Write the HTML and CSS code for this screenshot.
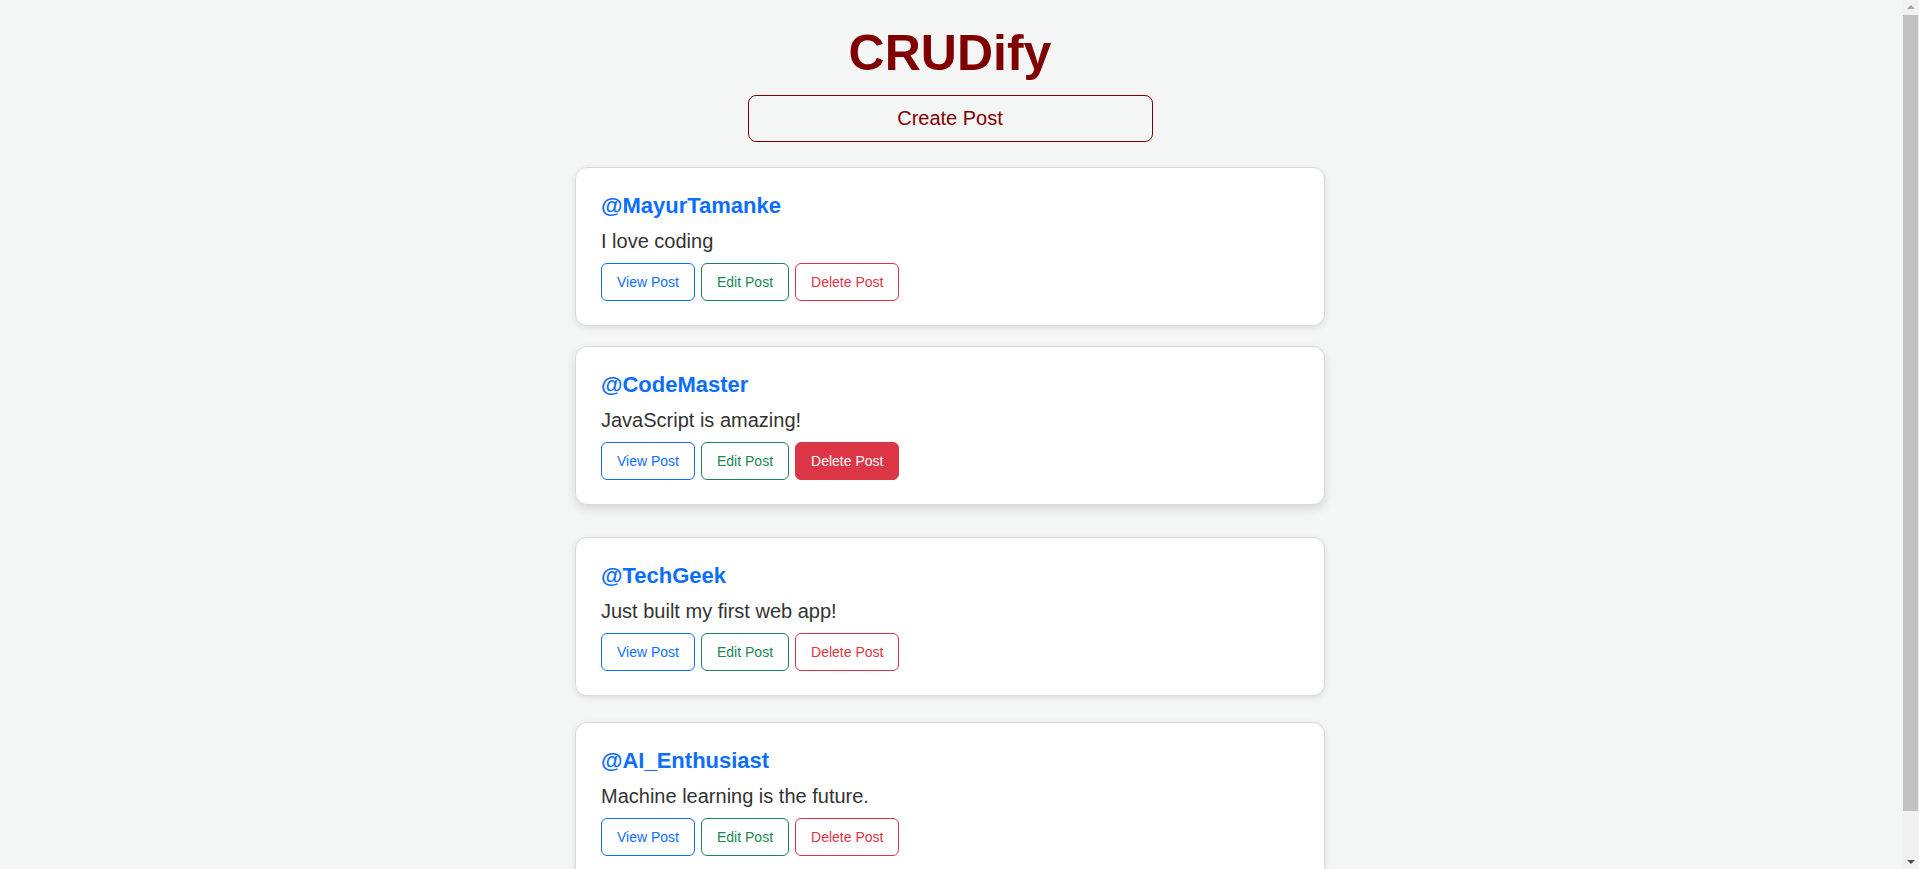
FILE: index.html
```html
<!DOCTYPE html>
<html lang="en">
<head>
<meta charset="UTF-8">
<title>CRUDify</title>
<link rel="stylesheet" href="styles.css">
</head>
<body>
<main class="app">
  <h1 class="title">CRUDify</h1>
  <button class="create-btn">Create Post</button>
  <div class="posts">
    <article class="card">
      <h3 class="username">@MayurTamanke</h3>
      <p class="content">I love coding</p>
      <div class="actions">
        <button class="btn btn-view">View Post</button>
        <button class="btn btn-edit">Edit Post</button>
        <button class="btn btn-delete">Delete Post</button>
      </div>
    </article>
    <article class="card card-hover">
      <h3 class="username">@CodeMaster</h3>
      <p class="content">JavaScript is amazing!</p>
      <div class="actions">
        <button class="btn btn-view">View Post</button>
        <button class="btn btn-edit">Edit Post</button>
        <button class="btn btn-delete btn-delete-hover">Delete Post</button>
      </div>
    </article>
    <article class="card">
      <h3 class="username">@TechGeek</h3>
      <p class="content">Just built my first web app!</p>
      <div class="actions">
        <button class="btn btn-view">View Post</button>
        <button class="btn btn-edit">Edit Post</button>
        <button class="btn btn-delete">Delete Post</button>
      </div>
    </article>
    <article class="card">
      <h3 class="username">@AI_Enthusiast</h3>
      <p class="content">Machine learning is the future.</p>
      <div class="actions">
        <button class="btn btn-view">View Post</button>
        <button class="btn btn-edit">Edit Post</button>
        <button class="btn btn-delete">Delete Post</button>
      </div>
    </article>
  </div>
</main>
<div class="scrollbar" aria-hidden="true">
  <div class="sb-arrow sb-up"></div>
  <div class="sb-thumb"></div>
  <div class="sb-arrow sb-down"></div>
</div>
</body>
</html>
```

FILE: styles.css
```css
html, body {
  margin: 0;
  padding: 0;
}

body {
  background: #f4f5f5;
  font-family: "Liberation Sans", Arial, sans-serif;
  color: #333;
  padding-right: 19px;
}

.app {
  display: flex;
  flex-direction: column;
  align-items: center;
  padding: 25px 0 30px;
}

.title {
  margin: 0 0 13px;
  font-size: 50px;
  line-height: 57px;
  font-weight: bold;
  color: #800000;
}

.create-btn {
  width: 405px;
  height: 47px;
  box-sizing: border-box;
  background: transparent;
  border: 1px solid #800000;
  border-radius: 8px;
  color: #800000;
  font-family: "Liberation Sans", Arial, sans-serif;
  font-size: 20px;
  padding: 0;
  margin: 0 0 25px;
}

.posts {
  display: flex;
  flex-direction: column;
  gap: 26px;
}

.card {
  width: 750px;
  box-sizing: border-box;
  background: #fff;
  border: 1px solid #d9d9d9;
  border-radius: 12px;
  box-shadow: 0 2px 6px rgba(0, 0, 0, 0.1);
  padding: 25px 25px 24px;
}

.card-hover {
  transform: translateY(-6px);
  box-shadow: 0 4px 10px rgba(0, 0, 0, 0.12);
}

.username {
  margin: 0 0 11px;
  font-size: 22px;
  font-weight: bold;
  color: #0d6efd;
}

.content {
  margin: 0 0 10px;
  font-size: 20px;
  color: #333;
}

.actions {
  display: flex;
  gap: 6px;
}

.btn {
  font-family: "Liberation Sans", Arial, sans-serif;
  font-size: 14px;
  padding: 10px 15px;
  background: #fff;
  border: 1px solid;
  border-radius: 6px;
  line-height: normal;
}

.btn-view {
  color: #0d6efd;
  border-color: #0d6efd;
}

.btn-edit {
  color: #198754;
  border-color: #198754;
}

.btn-delete {
  color: #dc3545;
  border-color: #dc3545;
}

.btn-delete-hover {
  background: #dc3545;
  color: #fff;
}

.scrollbar {
  position: fixed;
  top: 0;
  right: 0;
  width: 17px;
  height: 100vh;
  background: #f1f1f1;
  display: flex;
  flex-direction: column;
  align-items: center;
}

.sb-arrow {
  width: 0;
  height: 0;
  border-left: 4px solid transparent;
  border-right: 4px solid transparent;
}

.sb-up {
  margin-top: 5px;
  border-bottom: 4px solid #a3a3a3;
}

.sb-thumb {
  margin-top: 6px;
  width: 15px;
  height: 796px;
  background: #c1c1c1;
}

.sb-down {
  margin-top: auto;
  margin-bottom: 5px;
  border-top: 4px solid #505050;
}
```
